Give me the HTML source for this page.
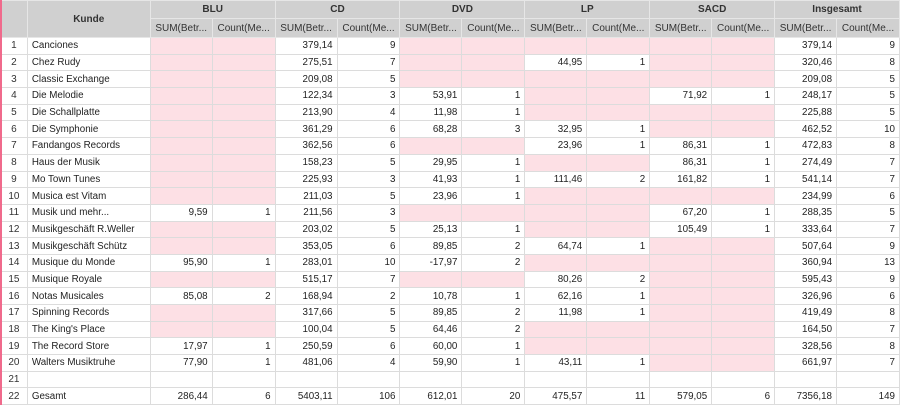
<!DOCTYPE html>
<html><head><meta charset="utf-8"><style>
html,body{margin:0;padding:0;background:#fff;width:900px;height:405px;overflow:hidden}
body{font-family:"Liberation Sans",sans-serif;font-size:9.8px;color:#222;position:relative}
.lb{position:absolute;left:0;top:0;width:2px;height:405px;background:#f06a8c;z-index:2}
table{border-collapse:collapse;table-layout:fixed;position:absolute;left:0;top:0}
td,th{border:1px solid #dcdcdc;padding:0 4px;white-space:nowrap;overflow:hidden;text-overflow:ellipsis}
th{background:#d0d0d0;font-weight:bold;color:#333;text-align:center;border-color:#e6e6e6}
thead tr.a th{height:17px;font-size:10px}
thead tr.b th{height:18px;font-weight:normal;font-size:10px;padding:0 2px;text-overflow:clip}
tbody td{height:15.7px;text-align:right}
tbody td.n{text-align:center;padding:0;color:#333;font-size:10px}
tbody td.k{text-align:left}
.p{background:#fde0e5}
</style></head><body><div class="lb"></div>
<table>
<colgroup><col style="width:27px"><col style="width:123px"><col style="width:62px"><col style="width:63px"><col style="width:62px"><col style="width:63px"><col style="width:62px"><col style="width:63px"><col style="width:62px"><col style="width:63px"><col style="width:62px"><col style="width:63px"><col style="width:62px"><col style="width:63px"></colgroup>
<thead>
<tr class="a"><th rowspan="2"></th><th rowspan="2">Kunde</th><th colspan="2">BLU</th><th colspan="2">CD</th><th colspan="2">DVD</th><th colspan="2">LP</th><th colspan="2">SACD</th><th colspan="2">Insgesamt</th></tr>
<tr class="b"><th>SUM(Betr...</th><th>Count(Me...</th><th>SUM(Betr...</th><th>Count(Me...</th><th>SUM(Betr...</th><th>Count(Me...</th><th>SUM(Betr...</th><th>Count(Me...</th><th>SUM(Betr...</th><th>Count(Me...</th><th>SUM(Betr...</th><th>Count(Me...</th></tr>
</thead>
<tbody>
<tr><td class="n">1</td><td class="k">Canciones</td><td class="p"></td><td class="p"></td><td>379,14</td><td>9</td><td class="p"></td><td class="p"></td><td class="p"></td><td class="p"></td><td class="p"></td><td class="p"></td><td>379,14</td><td>9</td></tr>
<tr><td class="n">2</td><td class="k">Chez Rudy</td><td class="p"></td><td class="p"></td><td>275,51</td><td>7</td><td class="p"></td><td class="p"></td><td>44,95</td><td>1</td><td class="p"></td><td class="p"></td><td>320,46</td><td>8</td></tr>
<tr><td class="n">3</td><td class="k">Classic Exchange</td><td class="p"></td><td class="p"></td><td>209,08</td><td>5</td><td class="p"></td><td class="p"></td><td class="p"></td><td class="p"></td><td class="p"></td><td class="p"></td><td>209,08</td><td>5</td></tr>
<tr><td class="n">4</td><td class="k">Die Melodie</td><td class="p"></td><td class="p"></td><td>122,34</td><td>3</td><td>53,91</td><td>1</td><td class="p"></td><td class="p"></td><td>71,92</td><td>1</td><td>248,17</td><td>5</td></tr>
<tr><td class="n">5</td><td class="k">Die Schallplatte</td><td class="p"></td><td class="p"></td><td>213,90</td><td>4</td><td>11,98</td><td>1</td><td class="p"></td><td class="p"></td><td class="p"></td><td class="p"></td><td>225,88</td><td>5</td></tr>
<tr><td class="n">6</td><td class="k">Die Symphonie</td><td class="p"></td><td class="p"></td><td>361,29</td><td>6</td><td>68,28</td><td>3</td><td>32,95</td><td>1</td><td class="p"></td><td class="p"></td><td>462,52</td><td>10</td></tr>
<tr><td class="n">7</td><td class="k">Fandangos Records</td><td class="p"></td><td class="p"></td><td>362,56</td><td>6</td><td class="p"></td><td class="p"></td><td>23,96</td><td>1</td><td>86,31</td><td>1</td><td>472,83</td><td>8</td></tr>
<tr><td class="n">8</td><td class="k">Haus der Musik</td><td class="p"></td><td class="p"></td><td>158,23</td><td>5</td><td>29,95</td><td>1</td><td class="p"></td><td class="p"></td><td>86,31</td><td>1</td><td>274,49</td><td>7</td></tr>
<tr><td class="n">9</td><td class="k">Mo Town Tunes</td><td class="p"></td><td class="p"></td><td>225,93</td><td>3</td><td>41,93</td><td>1</td><td>111,46</td><td>2</td><td>161,82</td><td>1</td><td>541,14</td><td>7</td></tr>
<tr><td class="n">10</td><td class="k">Musica est Vitam</td><td class="p"></td><td class="p"></td><td>211,03</td><td>5</td><td>23,96</td><td>1</td><td class="p"></td><td class="p"></td><td class="p"></td><td class="p"></td><td>234,99</td><td>6</td></tr>
<tr><td class="n">11</td><td class="k">Musik und mehr...</td><td>9,59</td><td>1</td><td>211,56</td><td>3</td><td class="p"></td><td class="p"></td><td class="p"></td><td class="p"></td><td>67,20</td><td>1</td><td>288,35</td><td>5</td></tr>
<tr><td class="n">12</td><td class="k">Musikgeschäft R.Weller</td><td class="p"></td><td class="p"></td><td>203,02</td><td>5</td><td>25,13</td><td>1</td><td class="p"></td><td class="p"></td><td>105,49</td><td>1</td><td>333,64</td><td>7</td></tr>
<tr><td class="n">13</td><td class="k">Musikgeschäft Schütz</td><td class="p"></td><td class="p"></td><td>353,05</td><td>6</td><td>89,85</td><td>2</td><td>64,74</td><td>1</td><td class="p"></td><td class="p"></td><td>507,64</td><td>9</td></tr>
<tr><td class="n">14</td><td class="k">Musique du Monde</td><td>95,90</td><td>1</td><td>283,01</td><td>10</td><td>-17,97</td><td>2</td><td class="p"></td><td class="p"></td><td class="p"></td><td class="p"></td><td>360,94</td><td>13</td></tr>
<tr><td class="n">15</td><td class="k">Musique Royale</td><td class="p"></td><td class="p"></td><td>515,17</td><td>7</td><td class="p"></td><td class="p"></td><td>80,26</td><td>2</td><td class="p"></td><td class="p"></td><td>595,43</td><td>9</td></tr>
<tr><td class="n">16</td><td class="k">Notas Musicales</td><td>85,08</td><td>2</td><td>168,94</td><td>2</td><td>10,78</td><td>1</td><td>62,16</td><td>1</td><td class="p"></td><td class="p"></td><td>326,96</td><td>6</td></tr>
<tr><td class="n">17</td><td class="k">Spinning Records</td><td class="p"></td><td class="p"></td><td>317,66</td><td>5</td><td>89,85</td><td>2</td><td>11,98</td><td>1</td><td class="p"></td><td class="p"></td><td>419,49</td><td>8</td></tr>
<tr><td class="n">18</td><td class="k">The King's Place</td><td class="p"></td><td class="p"></td><td>100,04</td><td>5</td><td>64,46</td><td>2</td><td class="p"></td><td class="p"></td><td class="p"></td><td class="p"></td><td>164,50</td><td>7</td></tr>
<tr><td class="n">19</td><td class="k">The Record Store</td><td>17,97</td><td>1</td><td>250,59</td><td>6</td><td>60,00</td><td>1</td><td class="p"></td><td class="p"></td><td class="p"></td><td class="p"></td><td>328,56</td><td>8</td></tr>
<tr><td class="n">20</td><td class="k">Walters Musiktruhe</td><td>77,90</td><td>1</td><td>481,06</td><td>4</td><td>59,90</td><td>1</td><td>43,11</td><td>1</td><td class="p"></td><td class="p"></td><td>661,97</td><td>7</td></tr>
<tr><td class="n">21</td><td class="k"></td><td></td><td></td><td></td><td></td><td></td><td></td><td></td><td></td><td></td><td></td><td></td><td></td></tr>
<tr><td class="n">22</td><td class="k">Gesamt</td><td>286,44</td><td>6</td><td>5403,11</td><td>106</td><td>612,01</td><td>20</td><td>475,57</td><td>11</td><td>579,05</td><td>6</td><td>7356,18</td><td>149</td></tr>
</tbody></table>
</body></html>
